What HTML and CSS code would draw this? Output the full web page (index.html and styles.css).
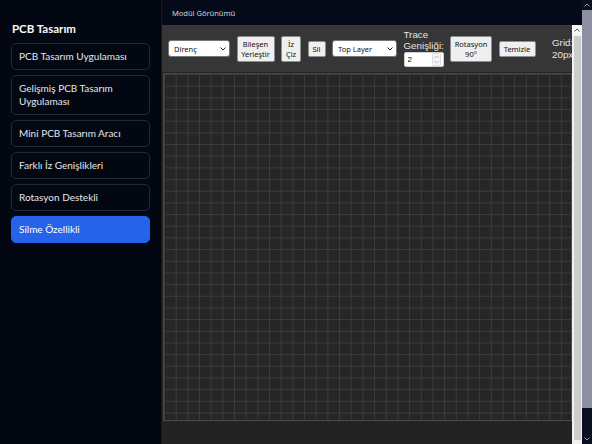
FILE: index.html
```html
<!DOCTYPE html>
<html>
  <head>
    <title>PCB Tasarım</title>
    <link rel="stylesheet" href="styles.css">
  </head>
  <body>
    <div class="app">
      <!-- Sol menü -->
      <aside class="sidebar">
        <h2 class="sidebar-title">PCB Tasarım</h2>
        <nav class="menu">
          <a class="menu-item" href="#">PCB Tasarım Uygulaması</a>
          <a class="menu-item" href="#">Gelişmiş PCB Tasarım Uygulaması</a>
          <a class="menu-item" href="#">Mini PCB Tasarım Aracı</a>
          <a class="menu-item" href="#">Farklı İz Genişlikleri</a>
          <a class="menu-item" href="#">Rotasyon Destekli</a>
          <a class="menu-item active" href="#">Silme Özellikli</a>
        </nav>
      </aside>

      <!-- Modül alanı -->
      <main class="content">
        <div class="content-header">Modül Görünümü</div>
        <div class="frame-row">
          <div class="frame">
            <div class="toolbar">
              <span class="select-wrap">
                <select class="tool-select select-component">
                  <option>Direnç</option>
                  <option>Kondansatör</option>
                  <option>LED</option>
                </select>
                <svg class="chevron" width="6" height="4" viewBox="0 0 6 4"><path d="M0.5 0.5 L3 3 L5.5 0.5" fill="none" stroke="#222" stroke-width="1"/></svg>
              </span>
              <button class="tool-btn btn-place">Bileşen Yerleştir</button>
              <button class="tool-btn btn-trace">İz Çiz</button>
              <button class="tool-btn btn-delete">Sil</button>
              <span class="select-wrap">
                <select class="tool-select select-layer">
                  <option>Top Layer</option>
                  <option>Bottom Layer</option>
                </select>
                <svg class="chevron" width="6" height="4" viewBox="0 0 6 4"><path d="M0.5 0.5 L3 3 L5.5 0.5" fill="none" stroke="#222" stroke-width="1"/></svg>
              </span>
              <label class="trace-label">
                Trace Genişliği:
                <span class="number-wrap">
                  <input class="trace-input" type="number" value="2" min="1" max="10">
                  <svg class="spinner" width="9" height="13" viewBox="0 0 9 13">
                    <rect x="0.5" y="0.5" width="8" height="12" rx="1" fill="#f4f4f4" stroke="#dcdcdc"/>
                    <path d="M2.5 5 L4.5 3 L6.5 5" fill="none" stroke="#b5b5b5" stroke-width="0.9"/>
                    <path d="M2.5 8 L4.5 10 L6.5 8" fill="none" stroke="#b5b5b5" stroke-width="0.9"/>
                  </svg>
                </span>
              </label>
              <button class="tool-btn btn-rotate">Rotasyon 90°</button>
              <button class="tool-btn btn-clear">Temizle</button>
              <span class="grid-info">Grid: 20px</span>
            </div>
            <div class="board"></div>
          </div>
          <!-- modül çerçevesinin kaydırma çubuğu -->
          <div class="scrollbar light">
            <div class="scroll-btn">
              <svg width="6" height="4" viewBox="0 0 6 4"><path d="M0.5 3.5 L3 1 L5.5 3.5" fill="none" stroke="#555" stroke-width="1"/></svg>
            </div>
            <div class="scroll-thumb"></div>
          </div>
        </div>
      </main>

      <!-- sayfa kaydırma çubuğu -->
      <div class="scrollbar dark">
        <div class="scroll-btn">
          <svg width="6" height="4" viewBox="0 0 6 4"><path d="M0.5 3.5 L3 1 L5.5 3.5" fill="none" stroke="#9a9aaa" stroke-width="1"/></svg>
        </div>
        <div class="scroll-thumb"></div>
        <div class="scroll-track"></div>
        <div class="scroll-btn">
          <svg width="6" height="4" viewBox="0 0 6 4"><path d="M0.5 0.5 L3 3 L5.5 0.5" fill="none" stroke="#9a9aaa" stroke-width="1"/></svg>
        </div>
      </div>
    </div>
  </body>
</html>
```

FILE: styles.css
```css
body {
  margin: 0;
  overflow: hidden;
  background-color: #030712;
  font-family: "Noto Sans", "Open Sans", sans-serif;
}

.app {
  display: flex;
  height: 444px;
}

/* sidebar */
.sidebar {
  width: 162px;
  flex-shrink: 0;
  border-right: 1px solid #111827;
  padding: 21px 11px 0 11px;
  box-sizing: border-box;
  background-color: #030712;
}

.sidebar-title {
  margin: 0 0 6px 1px;
  font-family: Lato, "Noto Sans", sans-serif;
  font-size: 11.5px;
  line-height: 16px;
  font-weight: 700;
  color: #f9fafb;
}

.menu {
  display: flex;
  flex-direction: column;
  gap: 5px;
}

.menu-item {
  display: block;
  padding: 6px 7px;
  border: 1px solid #1f2937;
  border-radius: 5px;
  font-family: Lato, "Noto Sans", sans-serif;
  font-size: 10px;
  line-height: 13px;
  color: #e5e7eb;
  text-decoration: none;
}

.menu-item.active {
  background-color: #2563eb;
  border-color: #2563eb;
  color: #fff;
}

/* content */
.content {
  flex: 1;
  display: flex;
  flex-direction: column;
  min-width: 0;
}

.content-header {
  height: 25px;
  flex-shrink: 0;
  padding-left: 10px;
  display: flex;
  align-items: center;
  font-size: 7.5px;
  color: #d1d5db;
  background-color: #050a18;
}

.frame-row {
  flex: 1;
  display: flex;
  min-height: 0;
}

.frame {
  flex: 1;
  min-width: 0;
  overflow: hidden;
  background-color: #232323;
}

/* scrollbars */
.scrollbar {
  width: 10px;
  flex-shrink: 0;
  display: flex;
  flex-direction: column;
}

.scroll-btn {
  height: 10px;
  display: flex;
  align-items: center;
  justify-content: center;
  flex-shrink: 0;
}

.scrollbar.light {
  background-color: #f1f1f1;
}

.scrollbar.light .scroll-btn {
  background-color: #f7f7f7;
}

.scrollbar.light .scroll-thumb {
  flex: 1;
  margin: 1px 1px 4px 2px;
  background-color: #cdcdcd;
}

.scrollbar.dark {
  background-color: #0b1020;
}

.scrollbar.dark .scroll-thumb {
  height: 398px;
  background-color: #8e8fa2;
}

.scrollbar.dark .scroll-track {
  flex: 1;
}

/* toolbar */
.toolbar {
  display: flex;
  align-items: center;
  gap: 6.5px;
  height: 47px;
  padding: 0 6px;
  background-color: #363636;
}

.select-wrap {
  position: relative;
  display: flex;
  flex-shrink: 0;
}

.chevron {
  position: absolute;
  right: 4px;
  top: 7px;
  pointer-events: none;
}

.tool-select {
  appearance: none;
  height: 17px;
  padding: 0 5px;
  border: 1px solid #767676;
  border-radius: 3px;
  background-color: #fff;
  font-family: "Noto Sans", sans-serif;
  font-size: 7.5px;
  color: #111;
}

.select-component {
  width: 62px;
}

.select-layer {
  width: 65px;
}

.tool-btn {
  padding: 2px 3px;
  border: 1px solid #8f8f8f;
  border-radius: 2px;
  background-color: #efefef;
  font-family: "Noto Sans", sans-serif;
  font-size: 7.5px;
  line-height: 10px;
  color: #111;
  flex-shrink: 0;
}

.btn-place {
  width: 38px;
}

.btn-trace {
  width: 20px;
}

.btn-delete {
  width: 18px;
}

.btn-rotate {
  width: 42px;
}

.btn-clear {
  width: 37px;
}

.trace-label {
  width: 40px;
  flex-shrink: 0;
  font-family: "Liberation Sans", Arial, sans-serif;
  font-size: 9.8px;
  line-height: 10.5px;
  color: #e5e5e5;
}

.number-wrap {
  position: relative;
  display: block;
  margin-top: 1px;
}

.spinner {
  position: absolute;
  right: 3px;
  top: 1px;
}

.trace-input {
  appearance: textfield;
  display: block;
  width: 40px;
  height: 15px;
  padding: 0 3px;
  box-sizing: border-box;
  border: 1px solid #d0d0d0;
  border-radius: 2px;
  font-family: "Liberation Sans", Arial, sans-serif;
  font-size: 8px;
}

.trace-input::-webkit-inner-spin-button {
  -webkit-appearance: none;
}

.grid-info {
  width: 30px;
  flex-shrink: 0;
  margin-left: 10px;
  font-family: "Liberation Sans", Arial, sans-serif;
  font-size: 9.8px;
  line-height: 11.5px;
  color: #e5e5e5;
}

/* board */
.board {
  width: 407px;
  height: 346px;
  margin: 1px 0 0 1px;
  border: 1px solid #4a4a4a;
  background-color: #262626;
  background-image:
    linear-gradient(to right, #3b3b3b 1px, transparent 1px),
    linear-gradient(to bottom, #3b3b3b 1px, transparent 1px);
  background-size: 11.68px 11.68px;
}
```
